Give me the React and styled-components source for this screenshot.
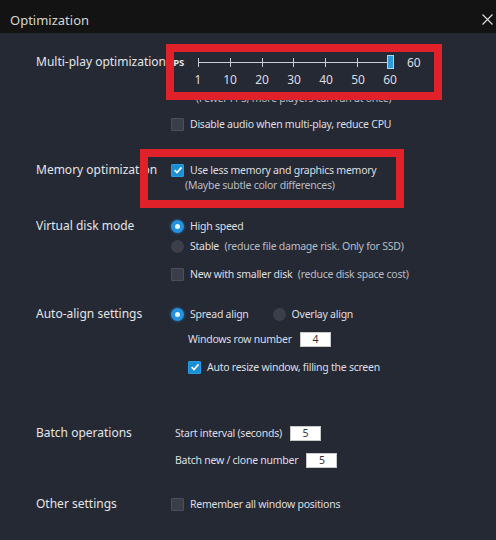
import React from 'react';
import styled, { createGlobalStyle } from 'styled-components';

const GlobalStyle = createGlobalStyle`
  html, body { margin:0; padding:0; background:#252934; }
  * { box-sizing:border-box; }
`;

const Window = styled.div`
  width:496px;
  height:540px;
  background:#252934;
  font-family:"Noto Sans", "Open Sans", sans-serif;
  color:#dedfe2;
  overflow:hidden;
`;

const TitleBar = styled.div`
  height:33px;
  background:#131313;
  display:flex;
  align-items:center;
  justify-content:space-between;
  padding:6px 0 0 10px;
  font-size:13px;
  color:#d6d6d6;
`;

const Close = styled.svg`
  width:11px;
  height:11px;
  margin-right:3px;
`;

const Section = styled.div`
  display:flex;
  align-items:flex-start;
  margin-top:${p => p.top}px;
`;

const SectionLabel = styled.div`
  width:171px;
  flex:none;
  padding-left:36px;
  font-size:12px;
  line-height:20px;
  white-space:nowrap;
  color:#e4e5e8;
`;

const Content = styled.div`
  position:relative;
  display:flex;
  flex-direction:column;
`;

const Row = styled.div`
  display:flex;
  align-items:center;
  height:20px;
  margin-top:${p => p.gap || 0}px;
  margin-left:${p => p.indent || 0}px;
  font-size:10.5px;
  letter-spacing:-0.25px;
  white-space:nowrap;
  gap:6px;
`;

const Muted = styled.span`
  color:#b9bcc4;
  margin-left:${p => p.space || 0}px;
`;

const Box = styled.span`
  width:13px;
  height:13px;
  flex:none;
  display:inline-flex;
  align-items:center;
  justify-content:center;
  border-radius:1px;
  background:${p => p.checked ? '#1b8fd6' : '#3a3e49'};
  border:1px solid ${p => p.checked ? '#2a9be0' : '#4a4f5b'};
`;

const Radio = styled.span`
  width:13px;
  height:13px;
  flex:none;
  border-radius:50%;
  display:inline-flex;
  align-items:center;
  justify-content:center;
  margin-left:${p => p.space || 0}px;
  background:${p => p.checked ? '#2293dc' : '#3b3f49'};
  box-shadow:${p => p.checked ? '0 0 3px rgba(60,170,255,0.6)' : 'none'};
  &::after{
    content:'';
    width:5px;
    height:5px;
    border-radius:50%;
    background:${p => p.checked ? '#e8f6ff' : 'transparent'};
  }
`;

const NumberBox = styled.span`
  width:31px;
  height:15px;
  background:#fff;
  border:1px solid #c9c9c9;
  color:#333;
  font-size:10.5px;
  display:inline-flex;
  align-items:center;
  justify-content:center;
  margin-left:${p => p.space || 0}px;
`;

const Highlight = styled.div`
  position:absolute;
  left:${p => p.x}px;
  top:${p => p.y}px;
  width:${p => p.w}px;
  height:${p => p.h}px;
  border:8px solid #e1212a;
  pointer-events:none;
`;

/* FPS slider */
const SliderRow = styled.div`
  display:flex;
  align-items:center;
  height:20px;
  margin-left:-3px;
`;

const Fps = styled.span`
  font-size:9.5px;
  font-weight:bold;
  width:30px;
  color:#e6e6e6;
`;

const Track = styled.div`
  position:relative;
  width:192px;
  height:9px;
  display:flex;
  justify-content:space-between;
  background:linear-gradient(#c9ccd2, #c9ccd2) center / 100% 1px no-repeat;
`;

const Tick = styled.i`
  width:1px;
  height:9px;
  background:#c9ccd2;
`;

const Thumb = styled.span`
  position:absolute;
  right:-4px;
  top:-3px;
  width:7px;
  height:14px;
  background:#2f9ad8;
  border:1px solid #9fd8f8;
`;

const Value = styled.span`
  font-size:12px;
  margin-left:17px;
`;

const TickLabels = styled.div`
  display:grid;
  grid-template-columns:repeat(7, 32px);
  margin-left:11px;
  margin-top:-3px;
  height:20px;
  align-items:center;
  font-size:12px;
  text-align:center;
  color:#dcdde0;
`;

const Note = styled.div`
  font-size:10.5px;
  letter-spacing:-0.25px;
  color:#b9bcc4;
  margin-left:${p => p.indent}px;
  margin-top:${p => p.shift || 0}px;
  height:20px;
  line-height:20px;
  white-space:nowrap;
`;

const Check = () => (
  <svg width="10" height="10" viewBox="0 0 10 10">
    <path d="M1.6 5.2 L4 7.5 L8.5 2.4" fill="none" stroke="#fff" strokeWidth="1.6" />
  </svg>
);

const ticks = [1, 10, 20, 30, 40, 50, 60];

export default function App() {
  return (
    <Window>
      <GlobalStyle />
      <TitleBar>
        <span>Optimization</span>
        <Close viewBox="0 0 11 11">
          <path d="M0.5 0.5 L10.5 10.5 M10.5 0.5 L0.5 10.5" stroke="#d8d8d8" strokeWidth="1.2" />
        </Close>
      </TitleBar>

      <Section top={19}>
        <SectionLabel>Multi-play optimization</SectionLabel>
        <Content>
          <SliderRow>
            <Fps>FPS</Fps>
            <Track>
              {ticks.map(t => <Tick key={t} />)}
              <Thumb />
            </Track>
            <Value>60</Value>
          </SliderRow>
          <TickLabels>
            {ticks.map(t => <span key={t}>{t}</span>)}
          </TickLabels>
          <Note indent={25} shift={-1}>(Fewer FPS, more players can run at once)</Note>
          <Row gap={6}>
            <Box />
            <span>Disable audio when multi-play, reduce CPU</span>
          </Row>
          <Highlight x={-5} y={-8} w={276} h={56} />
        </Content>
      </Section>

      <Section top={26}>
        <SectionLabel>Memory optimization</SectionLabel>
        <Content>
          <Row>
            <Box checked><Check /></Box>
            <span>Use less memory and graphics memory</span>
          </Row>
          <Note indent={14} shift={-5}>(Maybe subtle color differences)</Note>
          <Highlight x={-31} y={-11} w={264} h={59} />
        </Content>
      </Section>

      <Section top={21}>
        <SectionLabel>Virtual disk mode</SectionLabel>
        <Content>
          <Row>
            <Radio checked />
            <span>High speed</span>
          </Row>
          <Row>
            <Radio />
            <span>Stable <Muted space={3}>(reduce file damage risk. Only for SSD)</Muted></span>
          </Row>
          <Row gap={8}>
            <Box />
            <span>New with smaller disk <Muted space={3}>(reduce disk space cost)</Muted></span>
          </Row>
        </Content>
      </Section>

      <Section top={20}>
        <SectionLabel>Auto-align settings</SectionLabel>
        <Content>
          <Row>
            <Radio checked />
            <span>Spread align</span>
            <Radio space={18} />
            <span>Overlay align</span>
          </Row>
          <Row gap={5} indent={17}>
            <span>Windows row number</span>
            <NumberBox space={2}>4</NumberBox>
          </Row>
          <Row gap={8} indent={17}>
            <Box checked><Check /></Box>
            <span>Auto resize window, filling the screen</span>
          </Row>
        </Content>
      </Section>

      <Section top={46}>
        <SectionLabel>Batch operations</SectionLabel>
        <Content>
          <Row indent={4}>
            <span>Start interval (seconds)</span>
            <NumberBox space={2}>5</NumberBox>
          </Row>
          <Row gap={7} indent={4}>
            <span>Batch new / clone number</span>
            <NumberBox space={2}>5</NumberBox>
          </Row>
        </Content>
      </Section>

      <Section top={24}>
        <SectionLabel>Other settings</SectionLabel>
        <Content>
          <Row>
            <Box />
            <span>Remember all window positions</span>
          </Row>
        </Content>
      </Section>
    </Window>
  );
}
